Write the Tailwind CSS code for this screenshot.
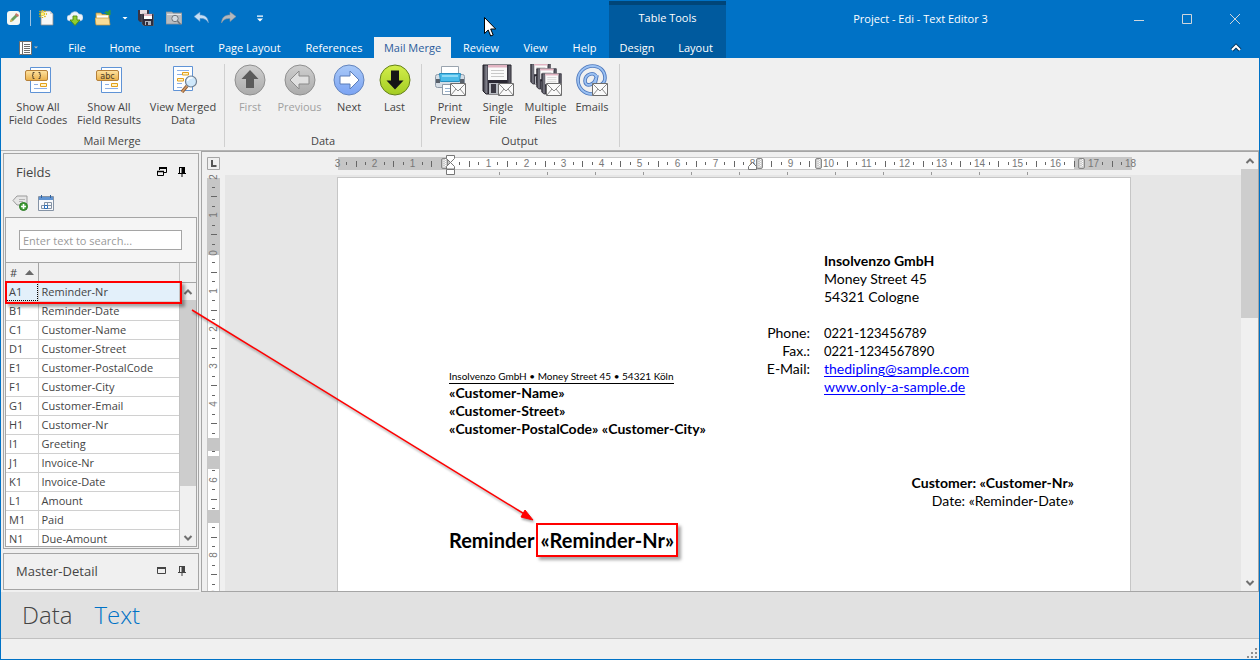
<!DOCTYPE html>
<html lang="en">
<head>
  <meta charset="UTF-8" />
  <meta name="viewport" content="width=device-width, initial-scale=1.0" />
  <title>Project - Edi - Text Editor 3</title>
  <script src="https://cdn.jsdelivr.net/npm/@tailwindcss/browser@4"></script>
</head>
<body class="font-['Open_Sans','Liberation_Sans',sans-serif] text-[11px] leading-[13px] text-[#444]">
  <div class="relative flex h-screen flex-col overflow-hidden bg-[#0072c6] px-px pb-px">

    <!-- Title bar and ribbon tabs -->
    <header class="flex h-[58px] shrink-0 text-white">
      <div class="flex w-[608px] shrink-0 flex-col justify-between">
        <div class="flex h-9 items-center pl-[5px]">
          <svg class="h-4 w-4" viewBox="0 0 16 16">
            <rect x="1" y="1" width="13" height="14" rx="3" fill="#f4f8f4" />
            <path d="M4 12l1-3 5-5 2 2-5 5z" fill="#6ba05f" />
            <path d="M9 5l1-2 3 2-1 2z" fill="#c9776a" />
            <path d="M4 12l1-3 2 2z" fill="#e0b050" />
          </svg>
          <span class="ml-2 h-4 w-px bg-[#9cc3e4]"></span>
          <button class="ml-2 h-4 w-4" aria-label="New">
            <svg viewBox="0 0 16 16"><path d="M2 1h9l3 3v11H2z" fill="#f7f7f7" stroke="#8d8d8d" stroke-width=".8" /><path d="M11 1v3h3z" fill="#cfd4da" /><path d="M3.500 0v8M0 4h8M.5 1l6 6M6.500 1l-6 6" stroke="#d9b400" stroke-width="1.400" stroke-dasharray="1.500 .8" /><circle cx="3.500" cy="4" r="1.600" fill="#fff27a" /></svg>
          </button>
          <button class="ml-3 h-4 w-4" aria-label="Download">
            <svg viewBox="0 0 16 16"><path d="M3 11a3 3 0 010-6 5 5 0 019-1 3.500 3.500 0 011 7z" fill="#eef4fa" stroke="#9dbcd8" stroke-width=".6" /><path d="M6 6h4v4h3l-5 5.500L3 10h3z" fill="#8fce2f" stroke="#4f8a12" stroke-width=".9" /></svg>
          </button>
          <button class="ml-3 h-4 w-4" aria-label="Open">
            <svg viewBox="0 0 16 16"><path d="M1 3h5l1 1.500h7V14H1z" fill="#f3d58a" stroke="#b98b2c" stroke-width=".7" /><path d="M2 5.500h11v4H2z" fill="#fff" /><path d="M0 8h14l1 7H1z" fill="#f8dc97" stroke="#c79a3c" stroke-width=".7" /><path d="M9 3c2-2 3-2 4-1l1-2h1.500v5h-5l1.500-1.500c-1-1-2-.5-3-.5z" fill="#3b9b34" /></svg>
          </button>
          <button class="ml-2 h-4 w-3" aria-label="Open recent">
            <svg viewBox="0 0 12 16"><path d="M3.500 7h5L6 9.500z" fill="#fff" /></svg>
          </button>
          <button class="ml-[7px] h-4 w-4" aria-label="Save all">
            <svg viewBox="0 0 16 16"><path d="M0 0h11v12H2L0 10z" fill="#3a3443" /><path d="M2 0h7v4H2z" fill="#e9dce0" /><path d="M4 4h11.500v12H6l-2-2z" fill="#2f2c3b" stroke="#777" stroke-width=".5" /><path d="M6 4h8v5H6z" fill="#fff" /><path d="M6 4h8v2H6z" fill="#e5b7c1" /><path d="M7 11h6v4H7z" fill="#aeb2ba" /><path d="M8 12h2v3H8z" fill="#2f2c3b" /></svg>
          </button>
          <button class="ml-3 h-4 w-4" aria-label="Find">
            <svg viewBox="0 0 16 16"><path d="M0 2h6l1 1h9v11H0z" fill="#b9bcc0" stroke="#8c9094" stroke-width=".8" /><path d="M1 4.500h14" stroke="#e2e4e6" /><circle cx="9" cy="8.500" r="3.200" fill="#d4dbe1" stroke="#6f767d" /><path d="M11.500 11l3 3.500" stroke="#6f767d" stroke-width="1.600" /></svg>
          </button>
          <button class="ml-3 h-4 w-4" aria-label="Undo">
            <svg viewBox="0 0 16 16"><path d="M0 6.500L6 2v3c5 0 8 2 8.500 8C12 9 10 8.500 6 8.500v3z" fill="#c3ddf5" stroke="#5b93c8" stroke-width=".6" /></svg>
          </button>
          <button class="ml-[11px] h-4 w-4" aria-label="Redo">
            <svg viewBox="0 0 16 16"><path d="M15 6.500L9 2v3C4 5 1 7 .5 13 3 9 5 8.500 9 8.500v3z" fill="#b3b8be" stroke="#8d949c" stroke-width=".6" /></svg>
          </button>
          <button class="ml-[15px] h-4 w-4" aria-label="Customize quick access toolbar">
            <svg viewBox="0 0 16 16"><path d="M5 5.500h6v1.200H5zM5 8.500h6L8 11.500z" fill="#fff" /></svg>
          </button>
        </div>
        <nav class="flex h-[21px] items-stretch">
          <button class="flex w-14 items-center pl-[18px]" aria-label="Application menu">
            <svg class="h-[14px] w-5" viewBox="0 0 20 14"><path d="M.5.500h12v13H.5z" fill="#fff" stroke="#6f6f6f" /><path d="M3.500 1v12" stroke="#6f6f6f" /><path d="M5 3.500h6M5 5.500h6M5 7.500h6M5 9.500h6M5 11.500h6" stroke="#6f6f6f" /><path d="M15 5.500h4L17 7.500z" fill="#b9b4ae" /></svg>
          </button>
          <button class="w-10">File</button>
          <button class="w-14">Home</button>
          <button class="w-[52px]">Insert</button>
          <button class="w-[89px]">Page Layout</button>
          <button class="w-20">References</button>
          <button class="w-[77px] bg-[#f0f0f0] text-[#2b5c9c]">Mail Merge</button>
          <button class="w-[60px]">Review</button>
          <button class="w-[49px]">View</button>
          <button class="w-[49px]">Help</button>
        </nav>
      </div>
      <div class="mt-px flex w-[117px] shrink-0 flex-col justify-between border-t-4 border-[#004578] bg-[#005a9e]">
        <div class="pt-1.5 text-center">Table Tools</div>
        <nav class="flex h-[21px]">
          <button class="w-14">Design</button>
          <button class="w-[61px]">Layout</button>
        </nav>
      </div>
      <div class="flex flex-1 flex-col justify-between">
        <div class="flex h-[37px] items-center">
          <h1 class="flex-1 text-center">Project - Edi - Text Editor 3</h1>
          <button class="flex w-12 justify-center" aria-label="Minimize"><svg class="h-3 w-3" viewBox="0 0 12 12"><path d="M1 7.500h10" stroke="#cfd6dc" /></svg></button>
          <button class="flex w-12 justify-center" aria-label="Maximize"><svg class="h-3 w-3" viewBox="0 0 12 12"><path d="M1.500 1.500h9v9h-9z" fill="none" stroke="#cfd6dc" /></svg></button>
          <button class="flex w-12 justify-center" aria-label="Close"><svg class="h-3 w-3" viewBox="0 0 12 12"><path d="M1 1l10 10M11 1L1 11" stroke="#cfd6dc" /></svg></button>
        </div>
        <button class="flex h-5 w-[46px] items-center justify-center self-end" aria-label="Collapse ribbon">
          <svg class="h-3 w-3" viewBox="0 0 12 12"><path d="M2 8l4-4 4 4" fill="none" stroke="#00365f" stroke-width="4" /><path d="M2 8l4-4 4 4" fill="none" stroke="#fff" stroke-width="2" /></svg>
        </button>
      </div>
    </header>

    <!-- Shared ribbon artwork, kept rendered so the gradients resolve -->
    <svg class="absolute h-0 w-0" aria-hidden="true">
      <defs>
        <linearGradient id="gold" x2="0" y2="1"><stop stop-color="#ffe3a1" /><stop offset="1" stop-color="#eab04a" /></linearGradient>
        <linearGradient id="grey" x2="0" y2="1"><stop stop-color="#cfcfcf" /><stop offset="1" stop-color="#ababab" /></linearGradient>
        <linearGradient id="blue" x2="0" y2="1"><stop stop-color="#a9c9f8" /><stop offset="1" stop-color="#7ba3f3" /></linearGradient>
        <linearGradient id="lime" x2="0" y2="1"><stop stop-color="#d3ee4b" /><stop offset="1" stop-color="#a3cc22" /></linearGradient>
        <linearGradient id="steel" x2="1"><stop stop-color="#2f2d37" /><stop offset=".12" stop-color="#85858f" /><stop offset=".2" stop-color="#2a2833" /><stop offset=".85" stop-color="#2a2833" /><stop offset="1" stop-color="#7a7a84" /></linearGradient>
        <g id="sheet">
          <path d="M8.500 3.500h20v25h-20z" fill="#fdfeff" stroke="#5f93d6" />
          <path d="M12 20.500h4M12 24.500h13M20 16.500h5" stroke="#8db0e6" />
          <path d="M18.500 19.500h6v3h-6z" fill="#fff3c9" stroke="#e2a01b" />
          <rect x="3.500" y="6.500" width="22" height="10" rx="1.500" fill="url(#gold)" stroke="#b5803a" />
        </g>
        <g id="mail">
          <path d="M16.500 19.500h15v12h-15z" fill="#fafafa" stroke="#6d6d6d" />
          <path d="M17 20l7 7 7-7M17 31l5-6M31 31l-5-6" fill="none" stroke="#8b8b8b" />
        </g>
        <g id="floppy">
          <path d="M1 1h28v29H4l-3-3z" fill="url(#steel)" stroke="#222029" />
          <path d="M6 1h19v15H6z" fill="#fafafa" /><path d="M6 1h19v2.500H6z" fill="#e2b4c2" />
          <path d="M9 6.500h13M9 9.500h13M9 12.500h13" stroke="#c9c9c9" />
          <path d="M7 19h17v11H7z" fill="#b9bcc2" /><path d="M9 20h5v9H9z" fill="#3b3943" />
        </g>
      </defs>
    </svg>

    <!-- Ribbon -->
    <section class="flex h-[93px] shrink-0 border-b border-[#b4b4b4] bg-[#f0f0f0] pt-1.5 pb-[3px]">
      <div class="flex flex-col justify-between border-r border-[#d0d0d0] pr-[3px] pl-0.5">
        <div class="flex items-start">
          <button class="flex w-[70px] flex-col items-center gap-1">
            <svg class="h-8 w-8" viewBox="0 0 32 32"><use href="#sheet" /><path d="M12.500 8.500h-1.500v2.500l-1 .5 1 .5v2.500h1.500M16.500 8.500h1.500v2.500l1 .5-1 .5v2.500h-1.500" fill="none" stroke="#5a4a33" /></svg>
            <span>Show All<br />Field Codes</span>
          </button>
          <button class="flex w-[72px] flex-col items-center gap-1">
            <svg class="h-8 w-8" viewBox="0 0 32 32"><use href="#sheet" /><text x="14.500" y="14.500" text-anchor="middle" class="font-['DejaVu_Sans',sans-serif] text-[8px]" fill="#4a3d2b">abc</text></svg>
            <span>Show All<br />Field Results</span>
          </button>
          <button class="flex w-[76px] flex-col items-center gap-1">
            <svg class="h-8 w-8" viewBox="0 0 32 32"><path d="M6.500 2.500h19v24h-19z" fill="#fdfeff" stroke="#5f93d6" /><path d="M10 6.500h12M10 10.500h5M18 15.500h5M10 19.500h5M10 23.500h5" stroke="#8db0e6" /><path d="M15.500 8.500h6v2.500h-6zM10.500 14.500h6v2.500h-6z" fill="#fff3c9" stroke="#e2a01b" /><path d="M20 22l-5 6" stroke="#8d5a33" stroke-width="3.500" /><path d="M20 22l-5 6" stroke="#d19a65" stroke-width="1.500" /><circle cx="24" cy="17.500" r="5.500" fill="#cfe8fb" stroke="#6f7f92" stroke-width="1.200" /><path d="M20.500 17a4 4 0 015-3" fill="none" stroke="#fff" stroke-width="1.400" /></svg>
            <span>View Merged<br />Data</span>
          </button>
        </div>
        <div class="text-center">Mail Merge</div>
      </div>
      <div class="flex flex-col justify-between border-r border-[#d0d0d0] px-[3px]">
        <div class="flex items-start">
          <button class="flex w-11 flex-col items-center gap-1 text-[#a0a0a0]" disabled>
            <svg class="h-8 w-8" viewBox="0 0 32 32"><circle cx="16" cy="16" r="15" fill="url(#grey)" stroke="#8f8f8f" /><path d="M16 6l8.500 9H20v9h-8v-9H7.500z" fill="#5b5b5b" /></svg>
            <span>First</span>
          </button>
          <button class="flex w-[55px] flex-col items-center gap-1 text-[#a0a0a0]" disabled>
            <svg class="h-8 w-8" viewBox="0 0 32 32"><circle cx="16" cy="16" r="15" fill="url(#grey)" stroke="#8f8f8f" /><path d="M6 16l9-9v5h10v8H15v5z" fill="#e0e0e0" stroke="#8a8a8a" /></svg>
            <span>Previous</span>
          </button>
          <button class="flex w-11 flex-col items-center gap-1">
            <svg class="h-8 w-8" viewBox="0 0 32 32"><circle cx="16" cy="16" r="15" fill="url(#blue)" stroke="#6384bd" /><path d="M26 16l-9-9v5H7v8h10v5z" fill="#fff" stroke="#5b7cb8" /></svg>
            <span>Next</span>
          </button>
          <button class="flex w-[47px] flex-col items-center gap-1">
            <svg class="h-8 w-8" viewBox="0 0 32 32"><circle cx="16" cy="16" r="15" fill="url(#lime)" stroke="#64801a" /><path d="M16 25.500L7.500 16.500H12v-10h8v10h4.500z" fill="#161616" /></svg>
            <span>Last</span>
          </button>
        </div>
        <div class="text-center">Data</div>
      </div>
      <div class="flex flex-col justify-between border-r border-[#d0d0d0] pr-[5px] pl-[3px]">
        <div class="flex items-start">
          <button class="flex w-[50px] flex-col items-center gap-1">
            <svg class="h-8 w-8" viewBox="0 0 32 32"><path d="M7.500 2.500h17v9h-17z" fill="#fff" stroke="#9aa4ae" /><rect x="1.500" y="10.500" width="29" height="13" rx="2" fill="#d5dde5" stroke="#8d9aa8" /><path d="M2 15h4v4H2zM26 15h4v4h-4z" fill="#59616b" /><path d="M5.500 9.500h21l-1 8h-19z" fill="#4cbce9" stroke="#268ebf" /><path d="M8 11h16v2H8z" fill="#8fdaf6" /><path d="M8.500 20.500h14v10h-14z" fill="#fff" stroke="#8d9aa8" /><path d="M11 24.500h5M11 27.500h5" stroke="#9ab2cd" /><use href="#mail" /></svg>
            <span>Print<br />Preview</span>
          </button>
          <button class="flex w-[46px] flex-col items-center gap-1">
            <svg class="h-8 w-8" viewBox="0 0 32 32"><use href="#floppy" /><use href="#mail" /></svg>
            <span>Single<br />File</span>
          </button>
          <button class="flex w-[49px] flex-col items-center gap-1">
            <svg class="h-8 w-8" viewBox="0 0 32 32"><use href="#floppy" transform="translate(0 -1) scale(.7)" /><use href="#floppy" transform="translate(6 4) scale(.7)" /><use href="#floppy" transform="translate(11 9) scale(.7)" /><use href="#mail" /></svg>
            <span>Multiple<br />Files</span>
          </button>
          <button class="flex w-11 flex-col items-center gap-1">
            <svg class="h-8 w-8" viewBox="0 0 32 32" fill="none"><path d="M21 11l-2 9c0 4 10 1 10-6C29 7 24 2 16.500 2S2 8 2 16s6 14 14 14c3 0 6-1 8-2" stroke="#4e78bd" stroke-width="3.600" /><path d="M20 13c-1-6-11-3-11 4 0 6 9 5 11-3" stroke="#4e78bd" stroke-width="3.600" /><path d="M21 11l-2 9c0 4 10 1 10-6C29 7 24 2 16.500 2S2 8 2 16s6 14 14 14c3 0 6-1 8-2" stroke="#9cc2f3" stroke-width="1.800" /><path d="M20 13c-1-6-11-3-11 4 0 6 9 5 11-3" stroke="#9cc2f3" stroke-width="1.800" /><use href="#mail" /></svg>
            <span>Emails</span>
          </button>
        </div>
        <div class="text-center">Output</div>
      </div>
    </section>

    <main class="flex min-h-0 flex-1 bg-[#f0f0f0]">
      <!-- Docked panels -->
      <aside class="flex w-[200px] shrink-0 flex-col gap-1 pt-0.5 pr-0.5 pb-0.5 pl-0.5">
        <section class="flex min-h-0 flex-1 flex-col border border-[#a5a5a5] px-px pb-px">
          <div class="flex h-[35px] shrink-0 items-center pr-[9px] pl-[11px]">
            <h2 class="flex-1 text-[13px] leading-[18px]">Fields</h2>
            <button class="h-3 w-3" aria-label="Restore"><svg viewBox="0 0 12 12" fill="none" stroke="#000"><path d="M3.500 4V1.500h7v5H8" /><path d="M3 2h8" stroke-width="2" /><path d="M1.500 5.500h6v4h-6z" /><path d="M1 5.500h7" stroke-width="1.500" /></svg></button>
            <button class="ml-2 h-3 w-3" aria-label="Pin"><svg viewBox="0 0 12 12"><path d="M3 1h6v6h1v1H6.500v3h-1V8H2V7h1z" fill="#000" /><path d="M4 2h1.500v5H4z" fill="#f0f0f0" /></svg></button>
          </div>
          <div class="flex h-7 shrink-0 items-center gap-2.5 pl-[7px]">
            <button class="h-4 w-4" aria-label="Add field"><svg viewBox="0 0 16 16"><path d="M1 5.500L5 1h10v9H5z" fill="#e6e6e6" stroke="#9b9b9b" /><path d="M7 4.500h6M7 6.500h4" stroke="#b4b4b4" /><circle cx="11.500" cy="11.500" r="4" fill="#3f9f35" stroke="#2c7a25" /><path d="M11.500 9v5M9 11.500h5" stroke="#fff" stroke-width="1.600" /></svg></button>
            <button class="h-4 w-4" aria-label="Calendar"><svg viewBox="0 0 16 16"><path d="M.5 1.500h15v14H.5z" fill="#f8f9fb" stroke="#8593a5" /><path d="M1 2h14v3H1z" fill="#5f93d2" /><path d="M3.500 0v3M12.500 0v3" stroke="#2f619e" /><path d="M6.500 7.500h7v6M3.500 10.500h10M3.500 13.500h10M3.500 10.500v3M6.500 7.500v6M9.500 7.500v6" fill="none" stroke="#8593a5" /><path d="M6.500 10.500h3v3h-3z" fill="#fff" stroke="#2a6cb8" /></svg></button>
          </div>
          <div class="flex min-h-0 flex-1 flex-col overflow-hidden border border-[#a5a5a5]">
            <div class="shrink-0 bg-[#f5f5f5] px-[13px] py-3">
              <input type="text" aria-label="Search fields" placeholder="Enter text to search..." class="block h-5 w-[163px] border border-[#a5a5a5] bg-white px-[3px] placeholder:text-[#9a9a9a]" />
            </div>
            <div class="relative flex min-h-0 flex-1 overflow-hidden border-t border-[#a5a5a5]">
              <table class="w-[173px] shrink-0 table-fixed border-collapse self-start bg-white text-left">
                <thead>
                  <tr class="h-[19px] border-b border-[#a5a5a5] bg-[#f0f0f0]">
                    <th class="w-8 border-r border-[#a5a5a5] p-0 pl-1 font-normal"><span class="flex items-center gap-2"># <svg class="h-[5px] w-[9px]" viewBox="0 0 9 5"><path d="M0 5l4.500-5L9 5z" fill="#6a6a6a" /></svg></span></th>
                    <th class="p-0 font-normal" aria-label="Field name"></th>
                  </tr>
                </thead>
                <tbody id="fields"></tbody>
              </table>
              <div class="flex flex-1 flex-col border-l border-[#a5a5a5]/60">
                <div class="h-5 shrink-0 border-b border-[#a5a5a5]"></div>
                <div class="flex h-[17px] shrink-0 items-center justify-center bg-[#f0f0f0]"><svg class="h-2 w-2.5" viewBox="0 0 10 8"><path d="M1.500 6L5 2.500 8.500 6" fill="none" stroke="#707070" stroke-width="2" /></svg></div>
                <div class="h-[186px] shrink-0 bg-[#cdcdcd]"></div>
                <div class="flex flex-1 items-end justify-center bg-[#f0f0f0] pb-1"><svg class="h-2 w-2.5" viewBox="0 0 10 8"><path d="M1.500 2L5 5.500 8.500 2" fill="none" stroke="#707070" stroke-width="2" /></svg></div>
              </div>
            </div>
          </div>
        </section>
        <section class="flex h-[37px] shrink-0 items-center border border-[#a5a5a5] pr-2.5 pb-0.5 pl-3">
          <h2 class="flex-1 text-[13px] leading-[18px]">Master-Detail</h2>
          <button class="h-3 w-3" aria-label="Maximize panel"><svg viewBox="0 0 12 12"><path d="M1.500 3.500h8v5h-8z" fill="none" stroke="#444" /><path d="M1 3h9" stroke="#444" stroke-width="2" /></svg></button>
          <button class="ml-2 h-3 w-3" aria-label="Pin panel"><svg viewBox="0 0 12 12"><path d="M3 1h6v6h1v1H6.500v3h-1V8H2V7h1z" fill="#444" /><path d="M4 2h1.500v5H4z" fill="#f0f0f0" /></svg></button>
        </section>
      </aside>

      <!-- Document editor -->
      <section class="flex min-w-0 flex-1 border border-[#a5a5a5]">
        <div class="flex min-w-0 flex-1 flex-col">
          <div class="flex h-[23px] shrink-0">
            <button class="w-[23px] shrink-0" aria-label="Tab type"><svg viewBox="0 0 23 23"><path d="M5.500 5.500h12v12h-12z" fill="#f0f0f0" stroke="#a5a5a5" /><path d="M10 8v6h4.500" fill="none" stroke="#555" stroke-width="2" /></svg></button>
            <svg id="ruler-h" class="h-[23px] w-[920px] shrink-0 overflow-visible font-['Liberation_Sans',sans-serif] text-[10px]"></svg>
          </div>
          <div class="flex min-h-0 flex-1">
            <svg id="ruler-v" class="h-full w-[23px] shrink-0 font-['Liberation_Sans',sans-serif] text-[10px]"></svg>
            <div class="flex-1 overflow-hidden bg-[#e6e6e6] pt-0.5 pl-28">
              <article class="h-[1123px] w-[794px] border border-[#c6c6c6] bg-white pt-[74px] pr-14 pl-[111px] font-['Lato',sans-serif] text-[14px] leading-[18px] text-black">
                <div class="flex justify-between">
                  <address class="mt-[117px] font-bold not-italic">
                    <p class="w-fit border-b border-black text-[10px] leading-[14px] font-normal">Insolvenzo GmbH • Money Street 45 • 54321 Köln</p>
                    <p>«Customer-Name»</p>
                    <p>«Customer-Street»</p>
                    <p>«Customer-PostalCode» «Customer-City»</p>
                  </address>
                  <div class="w-[250px]">
                    <p class="font-bold">Insolvenzo GmbH</p>
                    <p>Money Street 45</p>
                    <p>54321 Cologne</p>
                    <dl class="mt-[18px] -ml-16 grid grid-cols-[50px_1fr] gap-x-3.5">
                      <dt class="text-right">Phone:</dt><dd class="text-[13px]">0221-123456789</dd>
                      <dt class="text-right">Fax.:</dt><dd class="text-[13px]">0221-1234567890</dd>
                      <dt class="text-right">E-Mail:</dt><dd><a href="#" class="text-[#0000ff] underline underline-offset-2">thedipling@sample.com</a></dd>
                      <dd class="col-start-2"><a href="#" class="text-[#0000ff] underline underline-offset-2">www.only-a-sample.de</a></dd>
                    </dl>
                  </div>
                </div>
                <div class="mt-9 text-right">
                  <p class="font-bold">Customer: «Customer-Nr»</p>
                  <p>Date: «Reminder-Date»</p>
                </div>
                <h3 class="mt-[13px] flex items-center text-[20px] leading-[30px] font-bold">Reminder <span class="ml-0.5 border-2 border-[#f00] px-0.5 shadow-[3px_3px_3px_rgba(0,0,0,0.35)]">«Reminder-Nr»</span></h3>
              </article>
            </div>
          </div>
        </div>
        <div class="flex w-[17px] shrink-0 flex-col bg-[#f0f0f0]">
          <div class="flex h-[17px] items-center justify-center"><svg class="h-2 w-2.5" viewBox="0 0 10 8"><path d="M1.500 6L5 2.500 8.500 6" fill="none" stroke="#707070" stroke-width="2" /></svg></div>
          <div class="h-[149px] bg-[#cdcdcd]"></div>
          <div class="flex flex-1 items-end justify-center pb-1"><svg class="h-2 w-2.5" viewBox="0 0 10 8"><path d="M1.500 2L5 5.500 8.500 2" fill="none" stroke="#707070" stroke-width="2" /></svg></div>
        </div>
      </section>
    </main>

    <nav class="flex h-[47px] shrink-0 items-center gap-[22px] border-b border-[#c0c0c0] bg-[#e1e1e1] pl-[21px] text-[24px] leading-[34px] font-light">
      <button>Data</button>
      <button class="text-[#0072c6]">Text</button>
    </nav>
    <footer class="flex h-5 shrink-0 items-end justify-end bg-[#f0f0f0]">
      <svg class="h-3 w-3" viewBox="0 0 12 12" fill="#8f8f8f"><path d="M8 1h2v2H8zM8 5h2v2H8zM8 9h2v2H8zM4 5h2v2H4zM4 9h2v2H4zM0 9h2v2H0z" /></svg>
    </footer>

    <!-- Annotation: field row points at the merge field in the text -->
    <div class="pointer-events-none absolute top-[281px] left-[5px] h-[23px] w-[177px] border-2 border-[#f00] shadow-[3px_3px_3px_rgba(0,0,0,0.35)]"></div>
    <svg class="pointer-events-none absolute top-[300px] left-[185px] h-[225px] w-[355px] drop-shadow-[1px_2px_1px_rgba(0,0,0,0.35)]" viewBox="0 0 355 225">
      <path d="M7 10L341 215" stroke="#f00" stroke-width="1.500" />
      <path d="M348 220l-12-3 4-7z" fill="#f00" stroke="#f00" />
    </svg>
    <svg class="pointer-events-none absolute top-[17px] left-[484px] h-5 w-3" viewBox="0 0 12 20"><path d="M.5.500v16l3.700-3.500 2.500 6 2.500-1-2.500-6h5z" fill="#fff" stroke="#000" /></svg>
  </div>

  <script>
    const fields = [
      ['A1', 'Reminder-Nr'], ['B1', 'Reminder-Date'], ['C1', 'Customer-Name'], ['D1', 'Customer-Street'],
      ['E1', 'Customer-PostalCode'], ['F1', 'Customer-City'], ['G1', 'Customer-Email'], ['H1', 'Customer-Nr'],
      ['I1', 'Greeting'], ['J1', 'Invoice-Nr'], ['K1', 'Invoice-Date'], ['L1', 'Amount'], ['M1', 'Paid'], ['N1', 'Due-Amount'],
    ];
    document.getElementById('fields').innerHTML = fields.map(([id, name], i) => `
      <tr class="${i === 0 ? 'h-[19px] border-b border-[#d0d0d0] bg-[#e3f0fa]' : 'h-[19px] border-b border-[#d0d0d0]'}">
        <td class="${i === 0 ? 'border-r border-[#d0d0d0] p-0 pl-[3px] outline outline-dotted -outline-offset-1 outline-black' : 'border-r border-[#d0d0d0] p-0 pl-[3px]'}">${id}</td>
        <td class="p-0 pl-[3px]">${name}</td>
      </tr>`).join('');

    // 1 cm at 96 dpi
    const CM = 37.8;
    const rect = (x, y, w, h, fill) => `<rect x="${x}" y="${y}" width="${w}" height="${h}" fill="${fill}"/>`;

    // Horizontal ruler, 0 cm sits on the left page margin
    const zeroX = 225;
    let h = rect(113, 5, 794, 13, '#c6c6c6') + rect(225, 6, 624, 11, '#fff');
    for (let q = -12; q <= 72; q++) {
      const x = Math.round(zeroX + q * CM / 4);
      if (q % 4 === 0) {
        if (q !== 0) h += `<text x="${x + 0.5}" y="15" text-anchor="middle" fill="#777">${Math.abs(q / 4)}</text>`;
      } else if (q % 2 === 0) {
        h += rect(x, 9, 1, 6, '#666');
      } else {
        h += rect(x, 10, 1, 3, '#666');
      }
    }
    for (let x = 274; x <= 802; x += 48) h += rect(x, 20, 1, 3, '#999');
    [219, 534, 593, 856].forEach((x) => {
      h += `<rect x="${x - 2.5}" y="6.500" width="6" height="10" rx="1.500" fill="#ccc" stroke="#888"/>`;
      h += `<path d="M${x} 8v8M${x + 1.5} 7v8" stroke="#fff" stroke-dasharray="1 1"/>`;
    });
    h += '<path d="M221.500 3.500h8v3l-4 4-4-4zM221.500 17v-2.500l4-4 4 4V17zM221.500 17.500h8v5h-8zM523.500 17.500v-3l4-4 4 4v3z" fill="#fff" stroke="#777"/>';
    document.getElementById('ruler-h').innerHTML = h;

    // Vertical ruler, table rows are the grey gaps
    const zeroY = 78;
    let v = rect(5, 3, 13, 1200, '#c6c6c6') + rect(6, zeroY + 2, 11, 1200, '#fff');
    for (let q = -8; q <= 36; q++) {
      const y = Math.round(zeroY + q * CM / 4);
      if (q % 4 === 0) {
        v += `<text transform="translate(15 ${y}) rotate(-90)" text-anchor="middle" fill="#777">${Math.abs(q / 4)}</text>`;
      } else if (q % 2 === 0) {
        v += rect(9, y, 6, 1, '#666');
      } else {
        v += rect(10, y, 3, 1, '#666');
      }
    }
    [263, 281, 335].forEach((y) => { v += rect(5, y, 13, 13, '#c6c6c6'); });
    document.getElementById('ruler-v').innerHTML = v;
  </script>
</body>
</html>
